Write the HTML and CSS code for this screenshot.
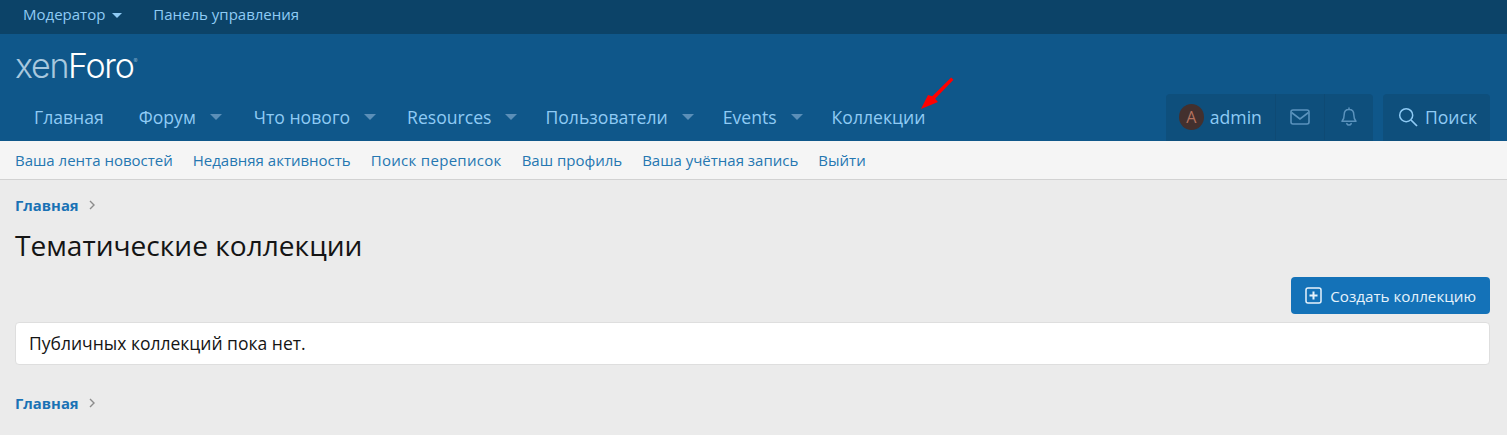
FILE: index.html
```html
<!DOCTYPE html>
<html>
<head>
<meta charset="UTF-8">
<title>Тематические коллекции</title>
<link rel="stylesheet" href="styles.css">
</head>
<body>

<div class="staffbar">
<a class="staff-link">Модератор<span class="caret-small"></span></a>
<a class="staff-link">Панель управления</a>
</div>

<div class="header">
<div class="logo"><span class="logo-xen">xen</span><span class="logo-foro">Foro</span><sup class="logo-reg">®</sup></div>
<div class="navrow">
<div class="nav">
<a class="tab">Главная</a>
<a class="tab has-menu">Форум<span class="caret"></span></a>
<a class="tab has-menu">Что нового<span class="caret"></span></a>
<a class="tab has-menu">Resources<span class="caret"></span></a>
<a class="tab has-menu">Пользователи<span class="caret"></span></a>
<a class="tab has-menu">Events<span class="caret"></span></a>
<a class="tab">Коллекции</a>
<svg class="arrow" viewBox="0 0 36 36"><path d="M33 1.5 L35.500 4 L16 24 L19 27.500 L1 35 L8.500 20 L13 21.500 Z" fill="#f00"/></svg>
</div>
<div class="usernav">
<div class="userbox">
<a class="user-cell user-main"><span class="avatar">A</span>admin</a>
<a class="user-cell icon-cell">
<svg class="icon" viewBox="0 0 20 16" width="20" height="16"><rect x="1" y="1" width="18" height="14" rx="2" fill="none" stroke="currentColor" stroke-width="1.600"/><path d="M1.5 3.5 L10 10 L18.5 3.5" fill="none" stroke="currentColor" stroke-width="1.600"/></svg>
</a>
<a class="user-cell icon-cell">
<svg class="icon" viewBox="0 0 16 20" width="16" height="20"><path d="M8 1v1.6M8 2.6c-3 0-4.8 2.2-4.8 5.2 0 3.6-.8 5-2.2 6.4h14c-1.400-1.400-2.200-2.800-2.200-6.400 0-3-1.800-5.200-4.800-5.200zM5.800 16.600c.4 1 1.200 1.500 2.200 1.500s1.800-.5 2.200-1.500" fill="none" stroke="currentColor" stroke-width="1.500" stroke-linejoin="round" stroke-linecap="round"/></svg>
</a>
</div>
<a class="searchbox">
<svg class="search-icon" viewBox="0 0 20 20" width="20" height="20"><circle cx="8.200" cy="8.200" r="6.500" fill="none" stroke="currentColor" stroke-width="1.500"/><path d="M13 13 L19 19" stroke="currentColor" stroke-width="1.700"/></svg>
Поиск
</a>
</div>
</div>
</div>

<div class="subnav">
<a>Ваша лента новостей</a>
<a>Недавняя активность</a>
<a>Поиск переписок</a>
<a>Ваш профиль</a>
<a>Ваша учётная запись</a>
<a>Выйти</a>
</div>

<div class="content">
<div class="crumbs"><a>Главная</a><svg class="chev" viewBox="0 0 6 10" width="6" height="10"><path d="M1 1 L5 5 L1 9" fill="none" stroke="currentColor" stroke-width="1.400"/></svg></div>
<h1>Тематические коллекции</h1>
<div class="actions">
<a class="button">
<svg class="plus" viewBox="0 0 17 17" width="17" height="17"><rect x="1" y="1" width="15" height="15" rx="2" fill="none" stroke="currentColor" stroke-width="1.500"/><path d="M8.500 4.500v8M4.500 8.500h8" stroke="currentColor" stroke-width="2"/></svg>
Создать коллекцию
</a>
</div>
<div class="message">Публичных коллекций пока нет.</div>
<div class="crumbs crumbs-bottom"><a>Главная</a><svg class="chev" viewBox="0 0 6 10" width="6" height="10"><path d="M1 1 L5 5 L1 9" fill="none" stroke="currentColor" stroke-width="1.400"/></svg></div>
</div>

</body>
</html>
```

FILE: styles.css
```css
*{
box-sizing: border-box;
margin:0; padding:0;
}

body{
background: #ebebeb;
font-family: "Open Sans", "Noto Sans", sans-serif;
color: #141414;
overflow: hidden;
}

.staffbar{
height: 34px;
background: #0c4368;
padding-left: 23px;
display: flex;
align-items: center;
gap: 31px;
font-size: 15px;
padding-bottom: 6px;
color: #8fcbf5;
}

.caret-small{
display: inline-block;
border: 5px solid transparent;
border-top-color: #8fcbf5;
border-bottom: 0;
margin-left: 7px;
vertical-align: 2px;
}

.header{
background: #0f578a;
height: 107px;
padding: 0 15px;
}

.logo{
height: 61px;
padding-top: 15px;
font-family: "Inter", sans-serif;
font-weight: 300;
font-size: 34px;
line-height: 34px;
letter-spacing: -1.300px;
}

.logo-xen{ color: #a8c8de; }
.logo-foro{ color: #fff; font-weight: 350; }
.logo-reg{
font-size: 6px;
color: #a8c8de;
vertical-align: 15px;
line-height: 0;
}

.navrow{
height: 46px;
display: flex;
justify-content: space-between;
}

.nav{
position: relative;
display: flex;
align-items: center;
padding: 0 0 2px 19px;
font-size: 17.600px;
color: #8fcbf5;
}

.tab{
display: flex;
align-items: center;
margin-right: 35px;
}

.tab.has-menu{
margin-right: 29px;
}

.tab:nth-child(2){
margin-right: 32px;
}

.tab:nth-child(3){
margin-right: 31px;
}

.tab:nth-child(4){
margin-right: 28px;
}

.caret{
display: inline-block;
border: 6px solid transparent;
border-top: 6px solid #5b8fb8;
border-bottom: 0;
margin-left: 14px;
}

.arrow{
position: absolute;
left: 905px;
top: -20px;
width: 34px;
height: 36px;
}

.usernav{
display: flex;
gap: 10px;
margin-top: -1px;
padding-right: 2px;
font-size: 17.600px;
color: #8fcbf5;
}

.userbox,.searchbox{
background: #0e4f7c;
border-radius: 4px 4px 0 0;
display: flex;
align-items: center;
padding-bottom: 1px;
}

.user-cell{
height: 100%;
display: flex;
align-items: center;
}

.user-main{
padding: 0 13px 0 13px;
width: 109px;
gap: 6px;
}

.icon-cell{
width: 49px;
justify-content: center;
border-left: 1px solid #0e4a74;
color: #5b93bd;
}

.avatar{
width: 26px;
height: 26px;
border-radius: 50%;
background: #43302e;
color: #b5735f;
font-size: 16px;
display: flex;
align-items: center;
justify-content: center;
}

.searchbox{
padding: 0 13px 1px 15px;
gap: 7px;
}

.subnav{
height: 39px;
background: #f5f5f5;
border-bottom: 1px solid #d2d2d2;
padding: 0 15px;
display: flex;
align-items: center;
gap: 20px;
font-size: 15px;
color: #2577b1;
}

.subnav a:nth-child(3){
letter-spacing: .3px;
}

.content{
padding: 16px 17px 0 15px;
}

.crumbs{
display: flex;
align-items: center;
gap: 10px;
height: 18px;
font-size: 14.800px;
font-weight: 700;
color: #1a72b5;
}

.chev{
color: #8c8c8c;
}

h1{
font-size: 28.100px;
font-weight: 400;
line-height: 34px;
margin-top: 14px;
}

.actions{
display: flex;
justify-content: flex-end;
margin-top: 15px;
}

.button{
height: 37px;
background: #1472b8;
border-radius: 4px;
color: #e6f2fb;
font-size: 15.200px;
display: flex;
align-items: center;
gap: 8px;
padding: 0 14px;
}

.plus{
color: #e6f2fb;
}

.message{
margin-top: 8px;
height: 43px;
background: #fff;
border: 1px solid #dedede;
border-radius: 4px;
padding: 0 13px 2px;
display: flex;
align-items: center;
font-size: 17.500px;
}

.crumbs-bottom{
margin-top: 29px;
}
```
